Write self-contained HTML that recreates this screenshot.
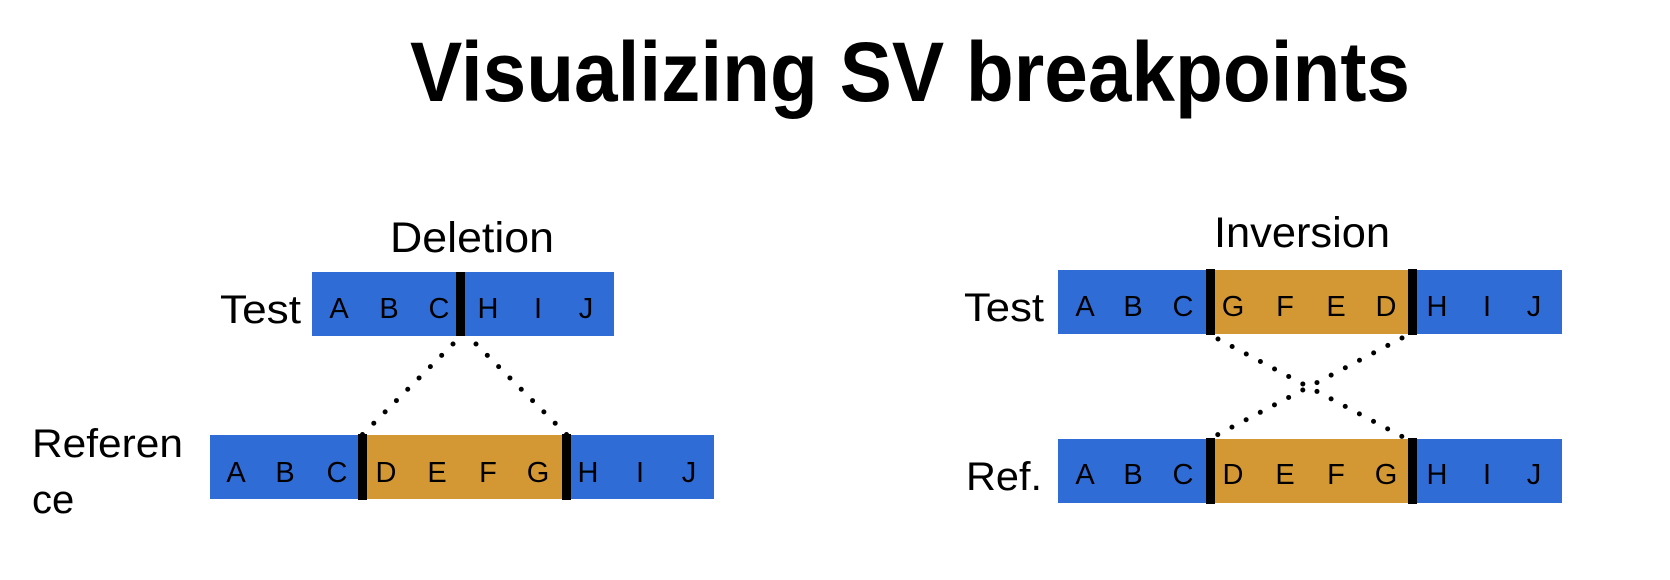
<!DOCTYPE html>
<html><head><meta charset="utf-8"><style>
html,body{margin:0;padding:0;background:#fff;width:1670px;height:580px;overflow:hidden}
svg{display:block}
text{font-family:"Liberation Sans",sans-serif;fill:#000}
</style></head><body>
<svg width="1670" height="580" viewBox="0 0 1670 580" xmlns="http://www.w3.org/2000/svg">
<text x="410" y="101" font-size="84" font-weight="bold" textLength="1000" lengthAdjust="spacingAndGlyphs">Visualizing SV breakpoints</text>

<!-- Deletion -->
<text x="390" y="252" font-size="43" textLength="164" lengthAdjust="spacingAndGlyphs">Deletion</text>
<text x="220" y="323" font-size="40" textLength="81" lengthAdjust="spacingAndGlyphs">Test</text>
<rect x="312" y="272" width="302" height="64" fill="#306CD6"/>
<rect x="456" y="272" width="9" height="64" fill="#000"/>
<g font-size="29" text-anchor="middle">
<text x="339" y="318">A</text><text x="389" y="318">B</text><text x="439" y="318">C</text><text x="488" y="318">H</text><text x="538" y="318">I</text><text x="586" y="318">J</text>
</g>
<text x="32" y="457" font-size="40" textLength="151" lengthAdjust="spacingAndGlyphs">Referen</text>
<text x="32" y="513" font-size="40">ce</text>
<rect x="210" y="435" width="504" height="64" fill="#306CD6"/>
<rect x="362" y="435" width="204" height="64" fill="#D39834"/>
<rect x="358" y="434" width="9" height="66" fill="#000"/>
<rect x="562" y="434" width="9" height="66" fill="#000"/>
<g font-size="29" text-anchor="middle">
<text x="236" y="482">A</text><text x="285" y="482">B</text><text x="337" y="482">C</text><text x="386" y="482">D</text><text x="437" y="482">E</text><text x="488" y="482">F</text><text x="538" y="482">G</text><text x="588" y="482">H</text><text x="640" y="482">I</text><text x="689" y="482">J</text>
</g>
<g stroke="#000" stroke-width="5" stroke-linecap="round" stroke-dasharray="0 16" fill="none">
<line x1="453" y1="344" x2="362" y2="435"/>
<line x1="476" y1="344" x2="567" y2="435"/>
</g>

<!-- Inversion -->
<text x="1214" y="247" font-size="43" textLength="176" lengthAdjust="spacingAndGlyphs">Inversion</text>
<text x="964" y="321" font-size="40" textLength="80" lengthAdjust="spacingAndGlyphs">Test</text>
<rect x="1058" y="270" width="504" height="64" fill="#306CD6"/>
<rect x="1210" y="270" width="202" height="64" fill="#D39834"/>
<rect x="1206" y="269" width="9" height="66" fill="#000"/>
<rect x="1408" y="269" width="9" height="66" fill="#000"/>
<g font-size="29" text-anchor="middle">
<text x="1085" y="316">A</text><text x="1133" y="316">B</text><text x="1183" y="316">C</text><text x="1233" y="316">G</text><text x="1285" y="316">F</text><text x="1336" y="316">E</text><text x="1386" y="316">D</text><text x="1437" y="316">H</text><text x="1487" y="316">I</text><text x="1534" y="316">J</text>
</g>
<text x="966" y="490" font-size="40" textLength="76" lengthAdjust="spacingAndGlyphs">Ref.</text>
<rect x="1058" y="439" width="504" height="64" fill="#306CD6"/>
<rect x="1210" y="439" width="202" height="64" fill="#D39834"/>
<rect x="1206" y="438" width="9" height="66" fill="#000"/>
<rect x="1408" y="438" width="9" height="66" fill="#000"/>
<g font-size="29" text-anchor="middle">
<text x="1085" y="484">A</text><text x="1133" y="484">B</text><text x="1183" y="484">C</text><text x="1233" y="484">D</text><text x="1285" y="484">E</text><text x="1336" y="484">F</text><text x="1386" y="484">G</text><text x="1437" y="484">H</text><text x="1487" y="484">I</text><text x="1534" y="484">J</text>
</g>
<g stroke="#000" stroke-width="5" stroke-linecap="round" stroke-dasharray="0 16" fill="none">
<line x1="1218" y1="339" x2="1403" y2="437"/>
<line x1="1402" y1="338" x2="1217" y2="435"/>
</g>
</svg>
</body></html>
